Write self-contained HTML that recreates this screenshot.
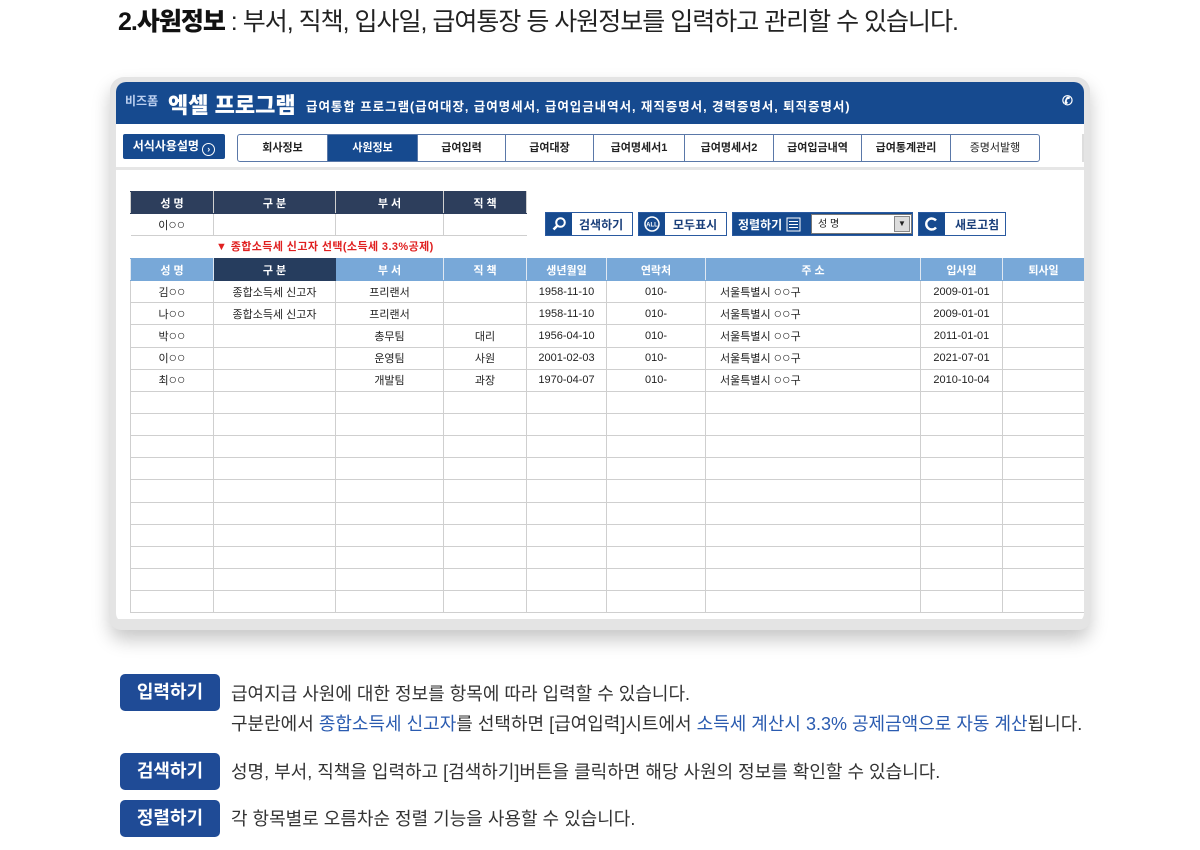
<!DOCTYPE html>
<html><head><meta charset="utf-8">
<style>
*{margin:0;padding:0;box-sizing:border-box}
body{width:1200px;height:850px;background:#fff;position:relative;overflow:hidden;font-family:"Liberation Sans","Noto Sans CJK KR",sans-serif;color:#222}
.abs{position:absolute}
.title{left:118px;top:2px;font-size:25px;color:#222;letter-spacing:-1px;white-space:nowrap}
.title b{font-weight:900;color:#111}
.card{left:110px;top:77px;width:980px;height:553px;border-radius:14px;background:#e4e4e4;box-shadow:0 10px 18px rgba(0,0,0,.22)}
.inner{left:116px;top:82px;width:968px;height:541px;background:#fff;border-radius:10px;overflow:hidden}
.hdr{left:0;top:0;width:968px;height:42px;background:#164a8f;color:#fff}
.tabrow{left:0;top:42px;width:968px;height:46px;background:#fff;border-bottom:3px solid #e6e6e6}
.tabs{left:121px;top:10px;height:28px;width:803px;border:1px solid #5a78a8;border-radius:3px;display:flex;background:#fff}
.tabs div{height:26px;line-height:26px;text-align:center;font-size:11px;font-weight:bold;border-right:1px solid #5a78a8;color:#222}
.tabs div:last-child{border-right:none;font-weight:normal}
table{border-collapse:collapse;table-layout:fixed;font-size:11px}
td,th{border:1px solid #cfcfcf;text-align:center;height:22.15px;padding:0;white-space:nowrap;overflow:hidden}
.o{font-size:14px;line-height:10px}
.btn{height:24px;border:1px solid #2a5aa0;background:#fff;display:flex;align-items:center;font-size:12px;font-weight:bold;color:#1a3f7a}
.btn .ic{width:26px;height:22px;background:#164a8f;display:flex;align-items:center;justify-content:center}
.badge{left:120px;width:100px;height:37px;background:#1f4b96;color:#fff;border-radius:5px;font-size:18px;font-weight:bold;text-align:center;line-height:37px}
.desc{left:231px;font-size:18px;color:#333;letter-spacing:0px;white-space:nowrap}
.hl{color:#2a5bb0}
</style></head><body>
<div class="abs title"><b>2.사원정보</b> : 부서, 직책, 입사일, 급여통장 등 사원정보를 입력하고 관리할 수 있습니다.</div>

<div class="abs card"></div>
<div class="abs inner">
  <div class="abs hdr">
    <div class="abs" style="left:9px;top:10px;font-size:12px;color:#bcd0f0;font-weight:bold">비즈폼</div>
    <div class="abs" style="left:52px;top:6px;font-size:22px;font-weight:900;letter-spacing:0px">엑셀 프로그램</div>
    <div class="abs" style="left:190px;top:14px;font-size:12.5px;font-weight:bold;letter-spacing:0.95px">급여통합 프로그램(급여대장, 급여명세서, 급여입금내역서, 재직증명서, 경력증명서, 퇴직증명서)</div>
    <div class="abs" style="left:946px;top:11px;font-size:13px;font-weight:bold">✆</div>
  </div>
  <div class="abs tabrow">
    <div class="abs" style="left:7px;top:10px;width:102px;height:25px;background:#164a8f;border-radius:2px;color:#fff;font-size:12px;font-weight:bold;line-height:25px;text-align:center">서식사용설명 <span style="display:inline-block;width:13px;height:13px;border:1.5px solid #fff;border-radius:50%;font-size:9px;line-height:10px;vertical-align:-2px">›</span></div>
    <div class="abs tabs">
      <div style="width:90px">회사정보</div>
      <div style="width:90px;background:#164a8f;color:#fff">사원정보</div>
      <div style="width:88px">급여입력</div>
      <div style="width:88px">급여대장</div>
      <div style="width:91px">급여명세서1</div>
      <div style="width:89px">급여명세서2</div>
      <div style="width:88px">급여입금내역</div>
      <div style="width:89px">급여통계관리</div>
      <div style="width:88px">증명서발행</div>
    </div>
    <div class="abs" style="left:966px;top:10px;width:4px;height:28px;background:#ddd"></div>
  </div>
</div>

<table class="abs" style="left:130px;top:191px;width:396px">
<colgroup><col style="width:83px"><col style="width:122px"><col style="width:108px"><col style="width:83px"></colgroup>
<tr style="background:#2d3e5c;color:#fff;font-weight:bold"><td style="border-color:#2d3e5c #cfcfcf">성 명</td><td style="border-color:#2d3e5c #cfcfcf">구 분</td><td style="border-color:#2d3e5c #cfcfcf">부 서</td><td style="border-color:#2d3e5c #cfcfcf">직 책</td></tr>
<tr><td style="border-left:none">이<span class="o">○○</span></td><td></td><td></td><td style="border-right:none"></td></tr>
</table>
<div class="abs" style="left:216px;top:238px;font-size:11px;font-weight:bold;color:#e02020;letter-spacing:0.4px">▼ 종합소득세 신고자 선택(소득세 3.3%공제)</div>

<div class="abs btn" style="left:545px;top:212px;width:88px"><div class="ic"><svg width="16" height="16" viewBox="0 0 16 16"><circle cx="9.5" cy="6.5" r="4.3" stroke="#fff" stroke-width="2" fill="none"/><path d="M6.5 9.5L2.5 13.5" stroke="#fff" stroke-width="2.6"/></svg></div><span style="margin-left:7px">검색하기</span></div>
<div class="abs btn" style="left:638px;top:212px;width:89px"><div class="ic"><svg width="18" height="18"><circle cx="9" cy="9" r="7" stroke="#fff" stroke-width="1.5" fill="none"/><text x="9" y="11.5" font-size="6" fill="#fff" text-anchor="middle" font-family="Liberation Sans" font-weight="bold">ALL</text></svg></div><span style="margin-left:8px">모두표시</span></div>
<div class="abs btn" style="left:732px;top:212px;width:181px;background:#164a8f;color:#fff"><span style="margin-left:5px">정렬하기</span><svg style="margin-left:4px" width="15" height="15"><rect x="1" y="1" width="13" height="13" fill="none" stroke="#fff"/><path d="M3 4.5h9M3 7.5h9M3 10.5h9" stroke="#fff"/></svg>
<div style="position:absolute;left:78px;top:1px;width:101px;height:20px;background:#fff;color:#222;font-size:10px;font-weight:normal;line-height:20px;padding-left:6px;border:1px solid #777">성 명<span style="position:absolute;right:1px;top:1px;width:16px;height:16px;background:#ddd;border:1px solid #888;font-size:8px;line-height:14px;text-align:center">▼</span></div></div>
<div class="abs btn" style="left:918px;top:212px;width:88px"><div class="ic"><svg width="16" height="16"><path d="M12 4.5A5.5 5.5 0 1 0 12 11.5" stroke="#fff" stroke-width="2.4" fill="none"/></svg></div><span style="margin-left:10px">새로고침</span></div>

<table class="abs" style="left:130px;top:258px;width:954px">
<colgroup><col style="width:83px"><col style="width:122px"><col style="width:108px"><col style="width:83px"><col style="width:80px"><col style="width:99px"><col style="width:215px"><col style="width:82px"><col style="width:82px"></colgroup>
<tr style="background:#78a8d8;color:#fff;font-weight:bold"><td style="border-color:#78a8d8 #e0e8f2">성 명</td><td style="background:#263d5e;border-color:#263d5e">구 분</td><td style="border-color:#78a8d8 #e0e8f2">부 서</td><td style="border-color:#78a8d8 #e0e8f2">직 책</td><td style="border-color:#78a8d8 #e0e8f2">생년월일</td><td style="border-color:#78a8d8 #e0e8f2">연락처</td><td style="border-color:#78a8d8 #e0e8f2">주 소</td><td style="border-color:#78a8d8 #e0e8f2">입사일</td><td style="border-color:#78a8d8 #e0e8f2">퇴사일</td></tr>
<tr><td>김<span class="o">○○</span></td><td>종합소득세 신고자</td><td>프리랜서</td><td></td><td>1958-11-10</td><td>010-</td><td style="text-align:left;padding-left:14px">서울특별시 <span class="o">○○</span>구</td><td>2009-01-01</td><td></td></tr>
<tr><td>나<span class="o">○○</span></td><td>종합소득세 신고자</td><td>프리랜서</td><td></td><td>1958-11-10</td><td>010-</td><td style="text-align:left;padding-left:14px">서울특별시 <span class="o">○○</span>구</td><td>2009-01-01</td><td></td></tr>
<tr><td>박<span class="o">○○</span></td><td></td><td>총무팀</td><td>대리</td><td>1956-04-10</td><td>010-</td><td style="text-align:left;padding-left:14px">서울특별시 <span class="o">○○</span>구</td><td>2011-01-01</td><td></td></tr>
<tr><td>이<span class="o">○○</span></td><td></td><td>운영팀</td><td>사원</td><td>2001-02-03</td><td>010-</td><td style="text-align:left;padding-left:14px">서울특별시 <span class="o">○○</span>구</td><td>2021-07-01</td><td></td></tr>
<tr><td>최<span class="o">○○</span></td><td></td><td>개발팀</td><td>과장</td><td>1970-04-07</td><td>010-</td><td style="text-align:left;padding-left:14px">서울특별시 <span class="o">○○</span>구</td><td>2010-10-04</td><td></td></tr>
<tr><td></td><td></td><td></td><td></td><td></td><td></td><td></td><td></td><td></td></tr>
<tr><td></td><td></td><td></td><td></td><td></td><td></td><td></td><td></td><td></td></tr>
<tr><td></td><td></td><td></td><td></td><td></td><td></td><td></td><td></td><td></td></tr>
<tr><td></td><td></td><td></td><td></td><td></td><td></td><td></td><td></td><td></td></tr>
<tr><td></td><td></td><td></td><td></td><td></td><td></td><td></td><td></td><td></td></tr>
<tr><td></td><td></td><td></td><td></td><td></td><td></td><td></td><td></td><td></td></tr>
<tr><td></td><td></td><td></td><td></td><td></td><td></td><td></td><td></td><td></td></tr>
<tr><td></td><td></td><td></td><td></td><td></td><td></td><td></td><td></td><td></td></tr>
<tr><td></td><td></td><td></td><td></td><td></td><td></td><td></td><td></td><td></td></tr>
<tr><td></td><td></td><td></td><td></td><td></td><td></td><td></td><td></td><td></td></tr>
</table>
<div class="abs" style="left:110px;top:619px;width:980px;height:11px;background:#e4e4e4;border-radius:0 0 14px 14px"></div>
<div class="abs" style="left:1084px;top:170px;width:6px;height:452px;background:#e4e4e4"></div>

<div class="abs badge" style="top:674px">입력하기</div>
<div class="abs desc" style="top:680px">급여지급 사원에 대한 정보를 항목에 따라 입력할 수 있습니다.</div>
<div class="abs desc" style="top:710px">구분란에서 <span class="hl">종합소득세 신고자</span>를 선택하면 [급여입력]시트에서 <span class="hl">소득세 계산시 3.3% 공제금액으로 자동 계산</span>됩니다.</div>
<div class="abs badge" style="top:753px">검색하기</div>
<div class="abs desc" style="top:758px">성명, 부서, 직책을 입력하고 [검색하기]버튼을 클릭하면 해당 사원의 정보를 확인할 수 있습니다.</div>
<div class="abs badge" style="top:800px">정렬하기</div>
<div class="abs desc" style="top:805px">각 항목별로 오름차순 정렬 기능을 사용할 수 있습니다.</div>
</body></html>
